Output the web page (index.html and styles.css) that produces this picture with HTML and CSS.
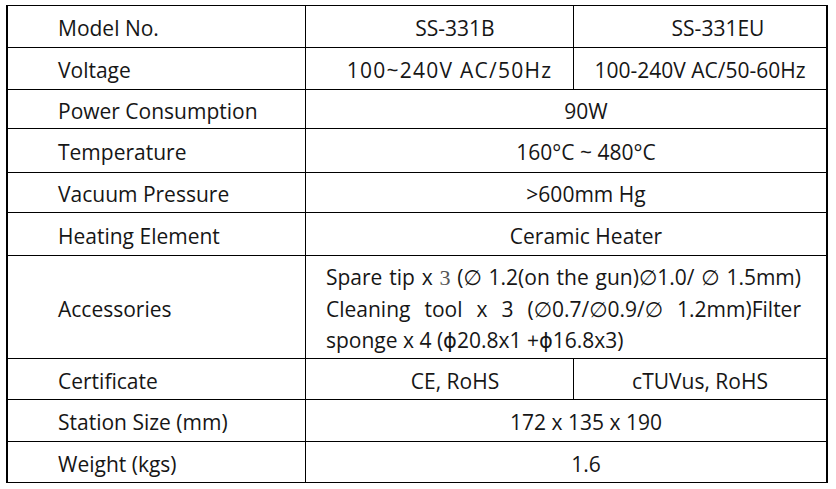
FILE: index.html
```html
<!DOCTYPE html>
<html>
<head>
<meta charset="utf-8">
<link rel="stylesheet" href="styles.css">
</head>
<body>
<table class="spec">
  <colgroup>
    <col class="c1"><col class="c2"><col class="c3">
  </colgroup>
  <tbody>
    <tr>
      <td class="label">Model No.</td>
      <td class="val p-b">SS-331B</td>
      <td class="val p-eu last">SS-331EU</td>
    </tr>
    <tr>
      <td class="label">Voltage</td>
      <td class="val p-v">100~240V AC/50Hz</td>
      <td class="val p-none last">100-240V AC/50-60Hz</td>
    </tr>
    <tr>
      <td class="label">Power Consumption</td>
      <td class="val p-m last" colspan="2">90W</td>
    </tr>
    <tr>
      <td class="label">Temperature</td>
      <td class="val p-m last" colspan="2">160°C ~ 480°C</td>
    </tr>
    <tr>
      <td class="label">Vacuum Pressure</td>
      <td class="val p-m last" colspan="2">&gt;600mm Hg</td>
    </tr>
    <tr>
      <td class="label">Heating Element</td>
      <td class="val p-m last" colspan="2">Ceramic Heater</td>
    </tr>
    <tr>
      <td class="label">Accessories</td>
      <td class="acc last" colspan="2">
        <div class="ln just">Spare tip x <span class="serif">3</span> (∅ 1.2(on the gun)∅1.0/ ∅ 1.5mm)</div>
        <div class="ln just">Cleaning tool x 3 (∅0.7/∅0.9/∅ 1.2mm)Filter</div>
        <div class="ln">sponge x 4 (ϕ20.8x1 +ϕ16.8x3)</div>
      </td>
    </tr>
    <tr>
      <td class="label">Certificate</td>
      <td class="val p-b">CE, RoHS</td>
      <td class="val p-none last">cTUVus, RoHS</td>
    </tr>
    <tr>
      <td class="label">Station Size (mm)</td>
      <td class="val p-m last" colspan="2">172 x 135 x 190</td>
    </tr>
    <tr>
      <td class="label">Weight (kgs)</td>
      <td class="val p-m last" colspan="2">1.6</td>
    </tr>
  </tbody>
</table>
</body>
</html>
```
FILE: styles.css
```css
html, body {
  margin: 0;
  padding: 0;
  background: #ffffff;
}

body {
  font-family: "Open Sans", "DejaVu Sans", sans-serif;
  font-size: 21px;
  line-height: 1.5;
  color: #161616;
}

.spec {
  margin: 5px 0 0 6px;
  border-collapse: separate;
  border-spacing: 0;
  table-layout: fixed;
  width: 822px;
  border-top: 1px solid #000;
  border-left: 2px solid #000;
}

.c1 { width: 298px; }
.c2 { width: 268px; }
.c3 { width: 254px; }

.spec td {
  border-right: 1px solid #000;
  border-bottom: 1px solid #000;
  padding: 5px 0 0 0;
  vertical-align: middle;
  white-space: nowrap;
  overflow: hidden;
}

.spec td.last {
  border-right: 2px solid #000;
}

.spec tr:nth-child(1) { height: 42px; }
.spec tr:nth-child(2) { height: 42px; }
.spec tr:nth-child(3) { height: 39px; }
.spec tr:nth-child(4) { height: 44px; }
.spec tr:nth-child(5) { height: 40px; }
.spec tr:nth-child(6) { height: 43px; }
.spec tr:nth-child(7) { height: 103px; }
.spec tr:nth-child(8) { height: 41px; }
.spec tr:nth-child(9) { height: 42px; }
.spec tr:nth-child(10) { height: 41px; }

.label {
  padding-left: 50px !important;
  text-align: left;
}

.val {
  text-align: center;
}

.p-b { padding-left: 31px !important; }
.p-v { padding-left: 20px !important; letter-spacing: 1.25px; }
.p-eu { padding-left: 36px !important; }
.p-none { padding-left: 0; }
.p-m { padding-left: 40px !important; }

.acc {
  padding: 3px 25px 0 20px !important;
  text-align: left;
}

.ln {
  white-space: nowrap;
}

.ln.just {
  white-space: normal;
  text-align: justify;
  text-align-last: justify;
}

.serif {
  font-family: "Liberation Serif", serif;
  color: #555;
  font-size: 22px;
}
```
